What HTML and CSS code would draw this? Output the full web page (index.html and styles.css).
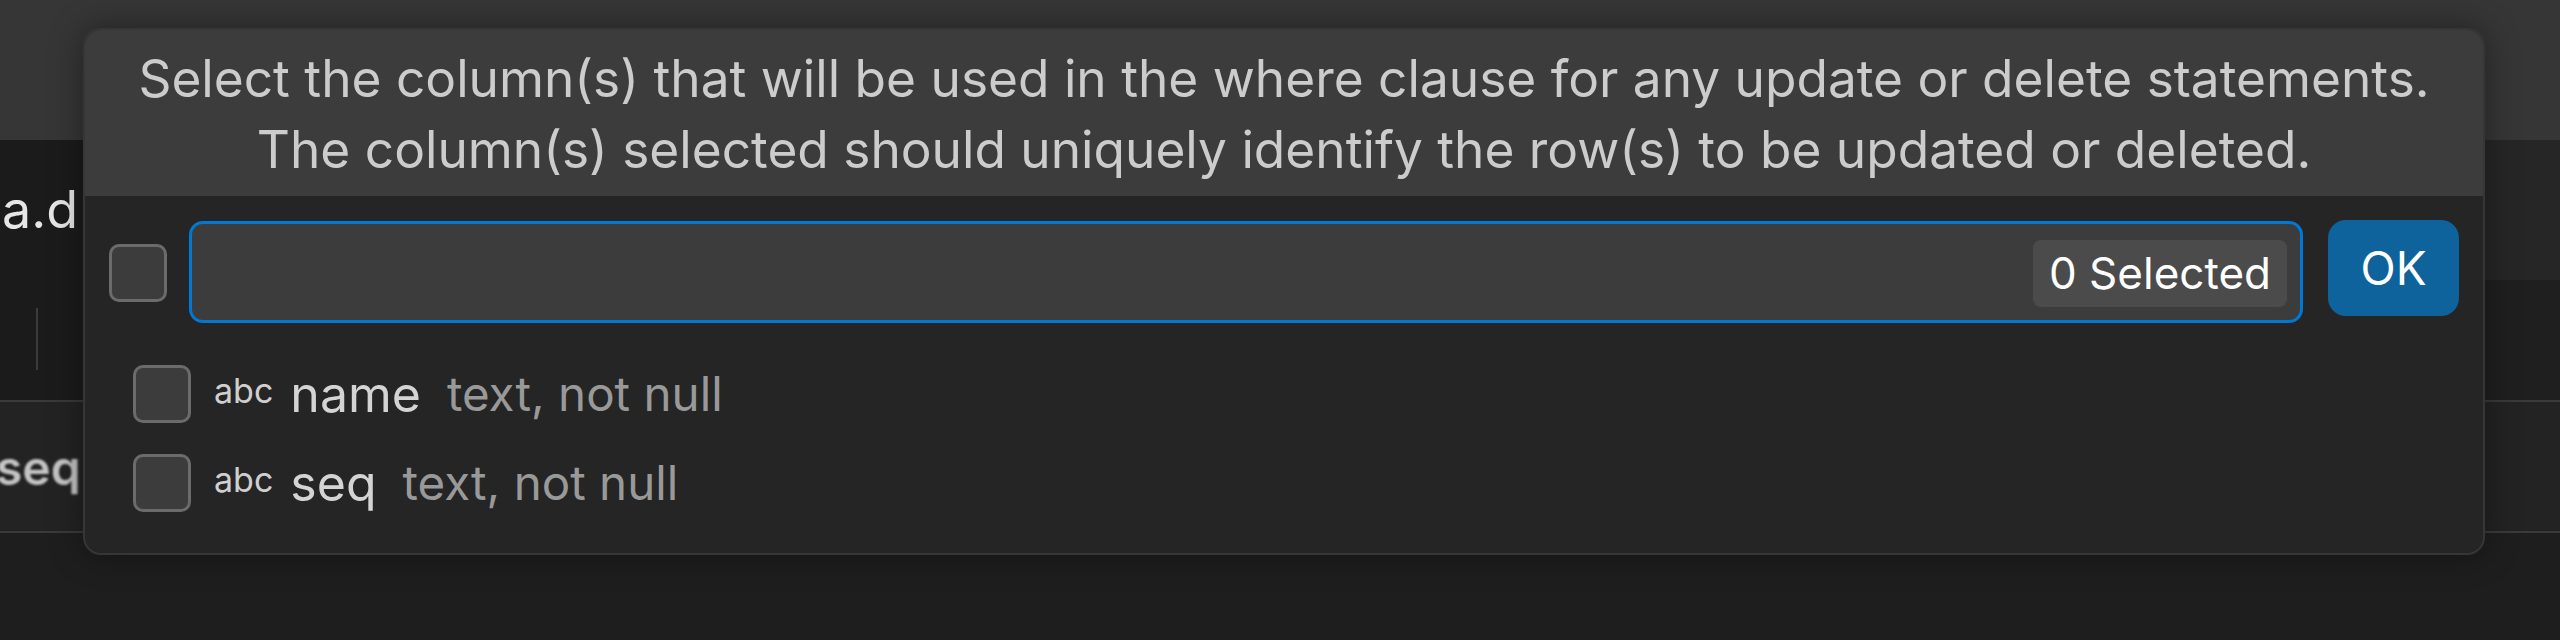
FILE: index.html
```html
<!DOCTYPE html>
<html lang="en">

<head>
  <meta charset="UTF-8">
  <meta name="viewport" content="width=device-width, initial-scale=1.0">
  <title>Select key columns</title>
  <link rel="stylesheet" href="styles.css">
</head>

<body>
  <div class="workbench">
    <div class="titlebar"></div>
    <div class="editor">
      <div class="editor-main">
        <div class="tab-label">a.d</div>
        <div class="toolbar"><span class="toolbar-sep"></span></div>
      </div>
      <div class="editor-side">
        <div class="side-top"></div>
        <div class="side-bottom"></div>
      </div>
    </div>
    <div class="grid-row"><span class="cell">seq</span></div>
  </div>

  <div class="quick-pick">
    <div class="message">
      Select the column(s) that will be used in the where clause for any update or delete statements.<br>
      The column(s) selected should uniquely identify the row(s) to be updated or deleted.
    </div>
    <div class="body">
      <div class="filter-row">
        <span class="checkbox toggle-all"></span>
        <div class="filter-box">
          <span class="count">0 Selected</span>
        </div>
        <button class="ok">OK</button>
      </div>
      <div class="list">
        <div class="item">
          <span class="checkbox"></span>
          <span class="type-icon">abc</span>
          <span class="label">name</span>
          <span class="desc">text, not null</span>
        </div>
        <div class="item">
          <span class="checkbox"></span>
          <span class="type-icon">abc</span>
          <span class="label">seq</span>
          <span class="desc">text, not null</span>
        </div>
      </div>
    </div>
  </div>
</body>

</html>
```

FILE: styles.css
```css
html,
body {
  margin: 0;
  padding: 0;
  width: 100%;
  height: 100%;
  background: #1e1e1e;
  font-family: "Inter", "Noto Sans", sans-serif;
  overflow: hidden;
}

* {
  box-sizing: border-box;
}

/* background workbench */
.workbench {
  width: 100%;
}

.titlebar {
  height: 140px;
  background: #363636;
}

.editor {
  display: flex;
  height: 260px;
}

.editor-main {
  flex: 1;
  background: #1b1b1b;
  padding-top: 40px;
}

.tab-label {
  font-size: 52px;
  line-height: 60px;
  color: #e6e6e6;
  padding-left: 2px;
}

.toolbar {
  margin-top: 68px;
  padding-left: 36px;
}

.toolbar-sep {
  display: block;
  width: 2px;
  height: 62px;
  background: #3c3c3c;
}

.editor-side {
  width: 1200px;
  display: flex;
  flex-direction: column;
}

.side-top {
  height: 140px;
  background: #262626;
}

.side-bottom {
  flex: 1;
  background: #1f1f1f;
}

.grid-row {
  height: 133px;
  background: #232323;
  border-top: 2px solid #3a3a3a;
  border-bottom: 2px solid #3a3a3a;
  padding-top: 38px;
}

.cell {
  display: block;
  margin-left: -4px;
  font-size: 48px;
  line-height: 56px;
  font-weight: 600;
  color: #c4c4c4;
  filter: blur(1.2px);
}

/* quick pick */
.quick-pick {
  position: absolute;
  left: 83px;
  top: 28px;
  width: 2402px;
  background: #252526;
  border: 2px solid #363636;
  border-radius: 18px;
  overflow: hidden;
  box-shadow: 0 0 34px rgba(0, 0, 0, 0.38);
}

.message {
  background: #3c3c3c;
  color: #cccccc;
  text-align: center;
  font-size: 51.4px;
  line-height: 71px;
  padding: 13px 0 11px;
}

.body {
  padding: 24px 24px 26px;
}

.filter-row {
  display: flex;
  align-items: flex-start;
}

.checkbox {
  flex: none;
  width: 58px;
  height: 58px;
  background: #3c3c3c;
  border: 3px solid #6b6b6b;
  border-radius: 10px;
}

.toggle-all {
  margin-top: 24px;
  margin-right: 22px;
}

.filter-box {
  flex: 1;
  height: 102px;
  margin-top: 1px;
  display: flex;
  align-items: center;
  justify-content: flex-end;
  padding-right: 13px;
  background: #3c3c3c;
  border: 3px solid #0078d4;
  border-radius: 14px;
}

.count {
  height: 67px;
  line-height: 67px;
  margin-top: 3px;
  padding: 0 16px;
  background: #4b4b4b;
  border-radius: 8px;
  color: #ffffff;
  font-size: 44px;
}

.ok {
  flex: none;
  width: 131px;
  height: 96px;
  margin-left: 25px;
  padding: 0;
  border: none;
  border-radius: 18px;
  background: #0e639c;
  color: #ffffff;
  font-family: inherit;
  font-size: 46px;
}

.list {
  margin-top: 26px;
  padding-left: 24px;
}

.item {
  display: flex;
  align-items: center;
  height: 89px;
}

.item .checkbox {
  margin-right: 23px;
}

.type-icon {
  font-size: 34px;
  color: #cfcfcf;
  margin-right: 17px;
  margin-top: -6px;
}

.label {
  font-size: 50px;
  color: #d4d4d4;
  margin-right: 26px;
}

.desc {
  font-size: 47.5px;
  color: #999999;
}
```
